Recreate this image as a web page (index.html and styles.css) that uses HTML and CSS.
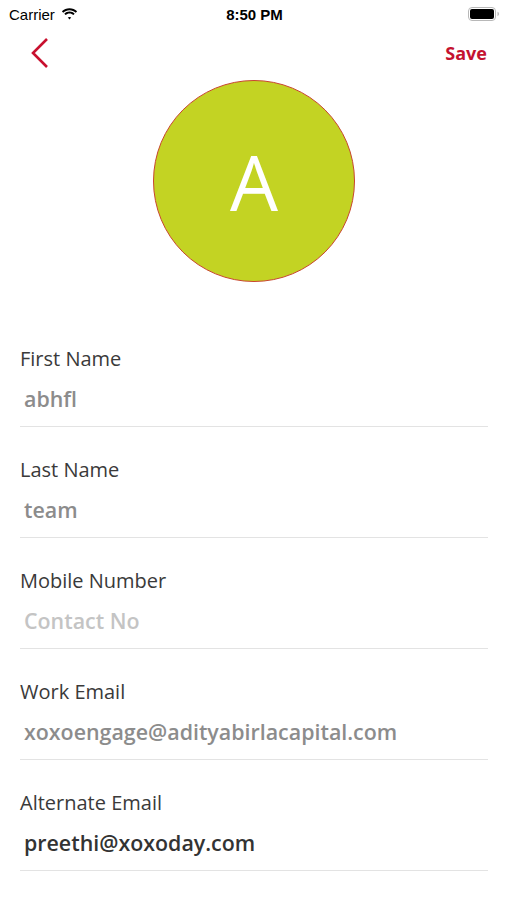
FILE: index.html
```html
<!doctype html>
<html lang="en">
 <head>
  <meta charset="UTF-8">
  <meta name="viewport" content="width=device-width, initial-scale=1.0">
  <title>Edit Profile</title>
  <link rel="stylesheet" href="styles.css">
 </head>
 <body>
  <div class="status-bar">
   <div class="status-left">
    <span>Carrier</span>
    <svg class="wifi" width="17" height="12" viewBox="0 0 17 12">
     <path d="M8.5 2.2c2.4 0 4.6.9 6.3 2.5l1.3-1.4C14.1 1.3 11.4.2 8.5.2S2.9 1.3.9 3.3l1.3 1.4C3.9 3.1 6.1 2.2 8.5 2.2z" fill="#000"/>
     <path d="M8.5 5.6c1.5 0 2.8.6 3.9 1.5l1.3-1.4C12.3 4.4 10.5 3.6 8.5 3.6S4.7 4.4 3.3 5.7l1.3 1.4c1.1-.9 2.4-1.5 3.9-1.5z" fill="#000"/>
     <path d="M8.5 8.9c.7 0 1.3.3 1.7.7L8.5 11.5 6.8 9.6c.4-.4 1-.7 1.7-.7z" fill="#000"/>
    </svg>
   </div>
   <div class="status-time">8:50 PM</div>
   <div class="status-right">
    <svg width="32" height="14" viewBox="0 0 32 14">
     <rect x="0.5" y="0.5" width="27" height="13" rx="3.5" fill="none" stroke="#b8b8b8"/>
     <rect x="2" y="2" width="24" height="10" rx="2" fill="#000"/>
     <path d="M29.5 4.8v4.4c.9-.3 1.5-1.2 1.5-2.2s-.6-1.9-1.5-2.2z" fill="#b8b8b8"/>
    </svg>
   </div>
  </div>

  <div class="nav">
   <svg class="back" width="20" height="32" viewBox="0 0 20 32">
    <path d="M17 2 L3 16 L17 30" fill="none" stroke="#c8102e" stroke-width="2.6"/>
   </svg>
   <span class="save">Save</span>
  </div>

  <div class="avatar-wrap">
   <div class="avatar">A</div>
  </div>

  <div class="form">
   <div class="field">
    <div class="label">First Name</div>
    <div class="value">abhfl</div>
   </div>
   <div class="field">
    <div class="label">Last Name</div>
    <div class="value">team</div>
   </div>
   <div class="field">
    <div class="label">Mobile Number</div>
    <div class="value placeholder">Contact No</div>
   </div>
   <div class="field">
    <div class="label">Work Email</div>
    <div class="value">xoxoengage@adityabirlacapital.com</div>
   </div>
   <div class="field">
    <div class="label">Alternate Email</div>
    <div class="value editable">preethi@xoxoday.com</div>
   </div>
  </div>
 </body>
</html>
```

FILE: styles.css
```css
body {
  margin: 0;
  background: #fff;
  font-family: "Open Sans", sans-serif;
  color: #333;
}
.status-bar {
  height: 28px;
  display: flex;
  align-items: center;
  justify-content: space-between;
  padding: 0 7px 0 9px;
  font-family: "Liberation Sans", Arial, sans-serif;
  font-size: 15px;
  color: #000;
}
.status-left {
  flex: 1;
  display: flex;
  align-items: center;
  gap: 6px;
}
.status-time {
  font-weight: bold;
}
.status-right {
  flex: 1;
  display: flex;
  justify-content: flex-end;
}
.nav {
  height: 50px;
  display: flex;
  align-items: center;
  justify-content: space-between;
  padding: 0 20px 0 30px;
}
.back {
  display: block;
}
.save {
  font-weight: 700;
  font-size: 18px;
  color: #c41230;
}
.avatar-wrap {
  display: flex;
  justify-content: center;
  padding-left: 1px;
}
.avatar {
  width: 200px;
  height: 200px;
  border-radius: 50%;
  background: #c3d323;
  border: 1px solid #c8452e;
  color: #fff;
  font-size: 76px;
  display: flex;
  align-items: center;
  justify-content: center;
  margin-top: 2px;
}
.form {
  margin: 34px 19px 0 20px;
}
.field {
  padding: 30px 0 14px;
  border-bottom: 1px solid #e3e3e3;
}
.label {
  font-size: 20px;
  line-height: 26px;
  color: #3a3a3a;
}
.value {
  margin-top: 14px;
  padding-left: 4px;
  font-size: 21.4px;
  line-height: 26px;
  font-weight: 600;
  color: #8c8c8c;
}
.value.placeholder {
  color: #c4c4c4;
}
.value.editable {
  color: #333;
}
```
